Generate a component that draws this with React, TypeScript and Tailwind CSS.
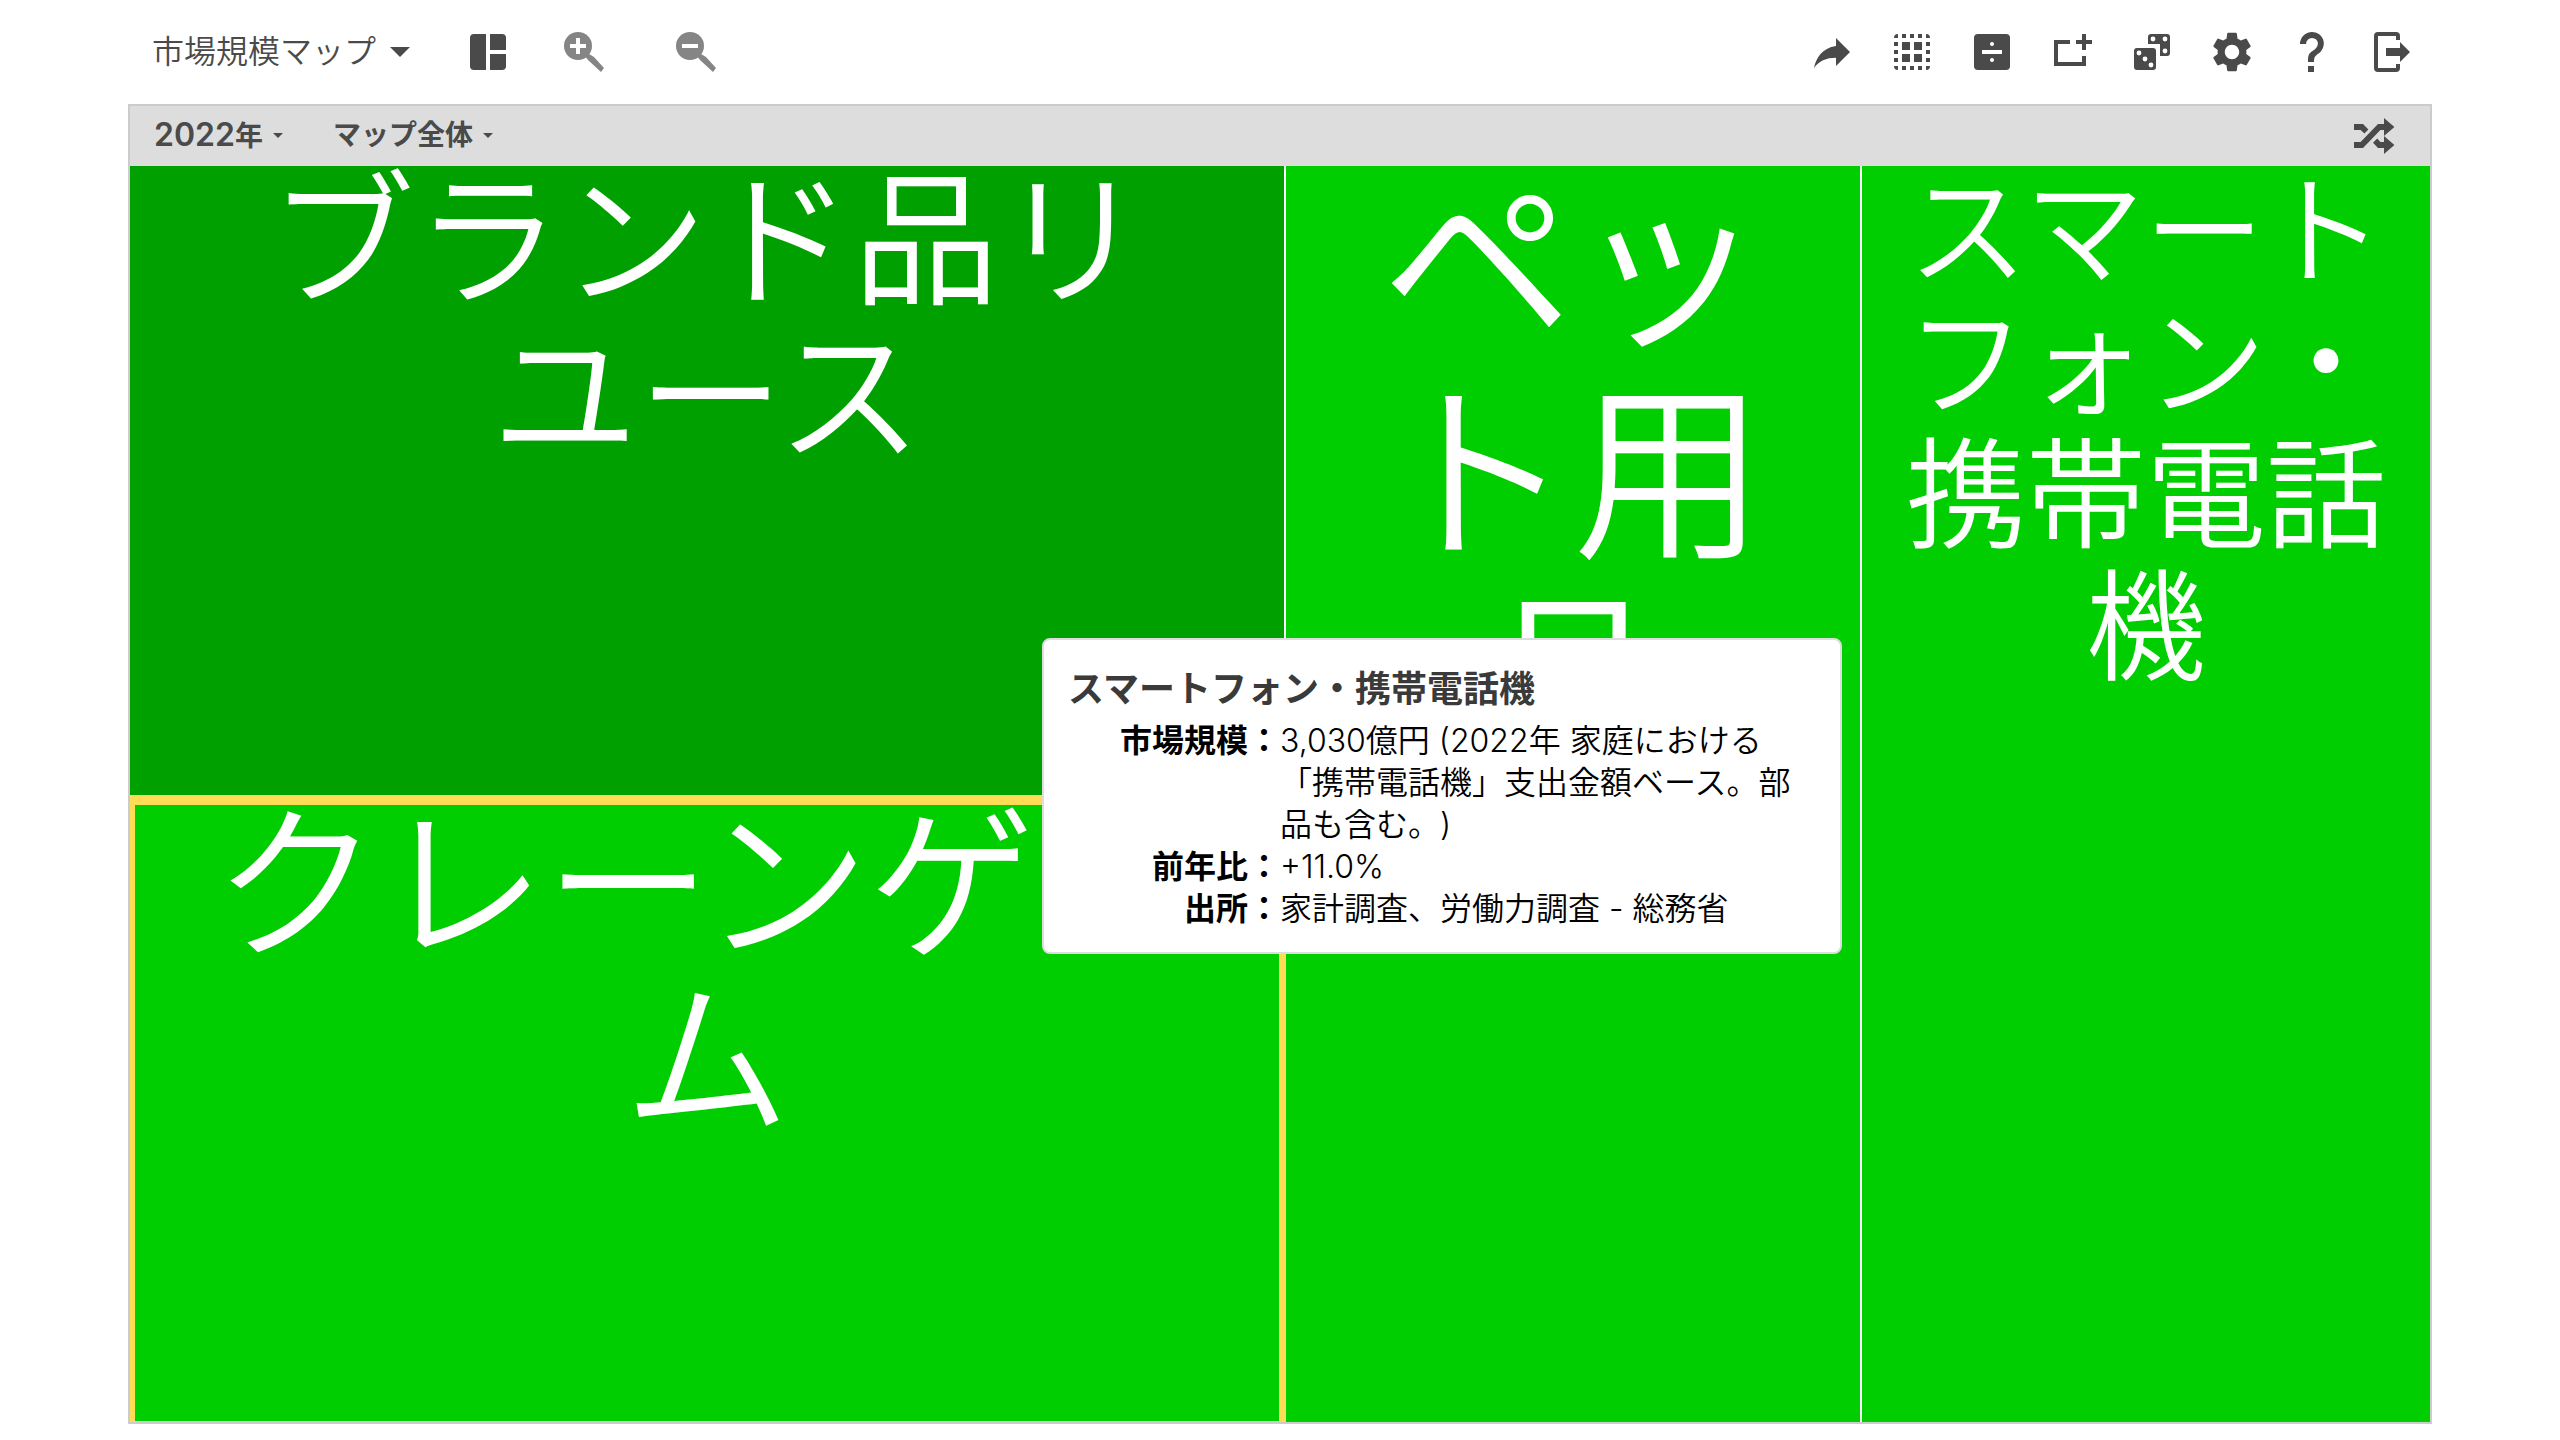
import type { ReactNode } from "react";
import { MdSettings } from "react-icons/md";

type Tile = {
  name: string;
  lines: string[];
  className: string;
  textClassName: string;
};

const BRAND: Tile = {
  name: "ブランド品リユース",
  lines: ["ブランド品リ", "ユース"],
  className: "bg-[#00a000] border-r-2 border-white",
  textClassName: "-mt-1 text-[146px] leading-[156px]",
};

const CRANE: Tile = {
  name: "クレーンゲーム",
  lines: ["クレーンゲー", "ム"],
  className: "bg-[#00ce00] border-t-10 border-r-7 border-b border-l-5 border-[#ffdc55]",
  textClassName: "-mt-2 text-[166px] leading-[175px]",
};

const PET: Tile = {
  name: "ペット用品",
  lines: ["ペッ", "ト用", "品"],
  className: "bg-[#00ce00] border-r-2 border-white",
  textClassName: "-mt-2 text-[192px] leading-[211px]",
};

const PHONE: Tile = {
  name: "スマートフォン・携帯電話機",
  lines: ["スマート", "フォン・", "携帯電話", "機"],
  className: "bg-[#00ce00]",
  textClassName: "text-[120px] leading-[132px]",
};

const DETAILS = [
  {
    label: "市場規模",
    value: "3,030億円 (2022年 家庭における「携帯電話機」支出金額ベース。部品も含む。)",
  },
  { label: "前年比", value: "+11.0%" },
  { label: "出所", value: "家計調査、労働力調査 - 総務省" },
];

const DashboardIcon = () => (
  <svg viewBox="0 0 36 36" fill="currentColor" className="size-9" aria-hidden="true">
    <path d="M4 0H16V36H4A4 4 0 0 1 0 32V4A4 4 0 0 1 4 0Z" />
    <path d="M20 0H32A4 4 0 0 1 36 4V16H20Z" />
    <path d="M20 20H36V32A4 4 0 0 1 32 36H20Z" />
  </svg>
);

const ZoomIcon = ({ sign }: { sign: string }) => (
  <svg viewBox="0 0 40 40" className="size-10" aria-hidden="true">
    <circle cx="14" cy="14" r="14" fill="currentColor" />
    <path d="M21 24L25 22L30 25L40 36L37 40L24 28Z" fill="currentColor" />
    <path d={sign} stroke="#fff" strokeWidth="4" />
  </svg>
);

// 24-unit glyphs drawn at 48px
const Glyph = ({ children }: { children: ReactNode }) => (
  <svg viewBox="0 0 24 24" fill="currentColor" className="size-12" aria-hidden="true">
    {children}
  </svg>
);

const ShareIcon = () => (
  <Glyph>
    <path d="M14 9V5l7 7-7 7v-4.1c-5 0-8.5 1.6-11 5.1 1-5 4-10 11-11z" />
  </Glyph>
);

const SelectGroupIcon = () => (
  <Glyph>
    <path d="M7 7h4v4H7zM13 7h4v4h-4zM7 13h4v4H7zM13 13h4v4h-4z" />
    <path d="M7 3h2v2H7zM11 3h2v2h-2zM15 3h2v2h-2zM7 19h2v2H7zM11 19h2v2h-2zM15 19h2v2h-2z" />
    <path d="M3 7h2v2H3zM3 11h2v2H3zM3 15h2v2H3zM19 7h2v2h-2zM19 11h2v2h-2zM19 15h2v2h-2z" />
    <path d="M5 3v2H3a2 2 0 0 1 2-2zM19 3v2h2a2 2 0 0 0-2-2zM5 21v-2H3a2 2 0 0 0 2 2zM19 21v-2h2a2 2 0 0 1-2 2z" />
  </Glyph>
);

const DivideIcon = () => (
  <Glyph>
    <rect x="3" y="3" width="18" height="18" rx="2" />
    <path d="M7 11h10v2H7z" fill="#fff" />
    <circle cx="12" cy="8" r="1" fill="#fff" />
    <circle cx="12" cy="16" r="1" fill="#fff" />
  </Glyph>
);

const AddFrameIcon = () => (
  <Glyph>
    <path d="M3 6H11V8H5V17H17V14H19V19H3Z" />
    <path d="M17 3h2v3h3v2h-3v3h-2V8h-3V6h3z" />
  </Glyph>
);

const DiceIcon = () => (
  <Glyph>
    <rect x="3" y="10" width="11" height="11" rx="1.5" />
    <path d="M11.5 3H19.5A1.5 1.5 0 0 1 21 4.5V12.5A1.5 1.5 0 0 1 19.5 14H16V8H10V4.5A1.5 1.5 0 0 1 11.5 3Z" />
    <g fill="#fff">
      <circle cx="5.5" cy="12.5" r="1.2" />
      <circle cx="8.5" cy="15.5" r="1.2" />
      <circle cx="11.5" cy="18.5" r="1.2" />
      <circle cx="12.5" cy="5.5" r="1.2" />
      <circle cx="18.5" cy="5.5" r="1.2" />
      <circle cx="18.5" cy="11.5" r="1.2" />
    </g>
  </Glyph>
);

const HelpIcon = () => (
  <Glyph>
    <path d="M10 19H13V22H10V19M12 2C17.35 2.22 19.68 7.62 16.5 11.67C15.67 12.67 14.33 13.33 13.67 14.17C13 15 13 16 13 17H10C10 15.33 10 13.92 10.67 12.92C11.33 11.92 12.67 11.33 13.5 10.67C15.92 8.43 15.32 5.26 12 5A3 3 0 0 0 9 8H6A6 6 0 0 1 12 2Z" />
  </Glyph>
);

const LogoutIcon = () => (
  <Glyph>
    <path d="M5 2H14A2 2 0 0 1 16 4V6H14V4H5V20H14V18H16V20A2 2 0 0 1 14 22H5A2 2 0 0 1 3 20V4A2 2 0 0 1 5 2Z" />
    <path d="M9 10H16V7L21 12L16 17V14H9Z" />
  </Glyph>
);

const ShuffleIcon = () => (
  <Glyph>
    <path d="M17 3L22.2 7.5L17 12L22.2 16.5L17 21V18H14L11.5 15.4L13.6 13.3L15.2 15H17V9H15.2L6.5 18H2V15H5.3L14 6H17Z" />
    <path d="M2 6H6.5L9.2 8.7L7.2 10.8L5.3 9H2Z" />
  </Glyph>
);

const Caret = ({ className }: { className: string }) => (
  <svg viewBox="0 0 20 10" fill="currentColor" className={className} aria-hidden="true">
    <path d="M0 0H20L10 10Z" />
  </svg>
);

const TOOLS = [
  { label: "共有", icon: <ShareIcon /> },
  { label: "選択", icon: <SelectGroupIcon /> },
  { label: "割り算", icon: <DivideIcon /> },
  { label: "枠を追加", icon: <AddFrameIcon /> },
  { label: "ランダム", icon: <DiceIcon /> },
  { label: "設定", icon: <MdSettings className="size-12" /> },
  { label: "ヘルプ", icon: <HelpIcon /> },
  { label: "ログアウト", icon: <LogoutIcon /> },
];

const TileBox = ({ tile }: { tile: Tile }) => (
  <div className={`overflow-hidden text-center font-[350] text-white ${tile.className}`}>
    <div className={tile.textClassName}>
      {tile.lines.map((line) => (
        <div key={line} className="whitespace-nowrap">
          {line}
        </div>
      ))}
    </div>
  </div>
);

const Tooltip = () => (
  <section
    role="tooltip"
    className="absolute top-[532px] left-[912px] w-[800px] rounded-lg border-2 border-[#ddd] bg-white px-6 pt-7 pb-[22px] text-[32px] leading-[42px] text-black [text-spacing-trim:space-all]"
  >
    <h2 className="mb-2.5 text-[36px] font-bold text-[#3a3a3a]">スマートフォン・携帯電話機</h2>
    <dl className="grid grid-cols-[212px_1fr]">
      {DETAILS.map((detail) => (
        <div key={detail.label} className="contents">
          <dt className="text-right font-bold">{detail.label}：</dt>
          <dd className="font-[350]">{detail.value}</dd>
        </div>
      ))}
    </dl>
  </section>
);

export default function App() {
  return (
    <div className="bg-white font-['Inter','Noto_Sans_CJK_JP',sans-serif] text-[#4a4a4a]">
      <div className="mx-auto flex h-screen w-[90%] flex-col pb-4">
        <header className="flex h-[104px] items-center justify-between pr-4 pl-6">
          <div className="flex items-center">
            <button type="button" className="flex items-center gap-3.5 text-[32px] font-[350]">
              市場規模マップ
              <Caret className="h-2.5 w-5" />
            </button>
            <button type="button" aria-label="レイアウト" className="ml-[60px]">
              <DashboardIcon />
            </button>
            <button type="button" aria-label="拡大" className="ml-[58px] text-[#858585]">
              <ZoomIcon sign="M6 14H22M14 6V22" />
            </button>
            <button type="button" aria-label="縮小" className="ml-[72px] text-[#858585]">
              <ZoomIcon sign="M6 14H22" />
            </button>
          </div>
          <div className="flex items-center gap-8">
            {TOOLS.map((tool) => (
              <button key={tool.label} type="button" aria-label={tool.label}>
                {tool.icon}
              </button>
            ))}
          </div>
        </header>

        <main className="relative flex flex-1 flex-col border-2 border-[#ccc]">
          <div className="flex h-[60px] items-center justify-between bg-[#ddd] pr-8 pl-6 text-[28px] font-bold">
            <div className="flex items-center gap-[50px] pb-0.5">
              <button type="button" className="flex items-center gap-2.5">
                <span>
                  <span className="text-[32px] font-semibold">2022</span>年
                </span>
                <Caret className="h-[5px] w-2.5" />
              </button>
              <button type="button" className="flex items-center gap-2.5">
                マップ全体
                <Caret className="h-[5px] w-2.5" />
              </button>
            </div>
            <button type="button" aria-label="シャッフル">
              <ShuffleIcon />
            </button>
          </div>

          <div className="grid flex-1 grid-cols-[1156fr_576fr_568fr]">
            <div className="grid grid-rows-[629fr_627fr]">
              <TileBox tile={BRAND} />
              <TileBox tile={CRANE} />
            </div>
            <TileBox tile={PET} />
            <TileBox tile={PHONE} />
          </div>

          <Tooltip />
        </main>
      </div>
    </div>
  );
}
